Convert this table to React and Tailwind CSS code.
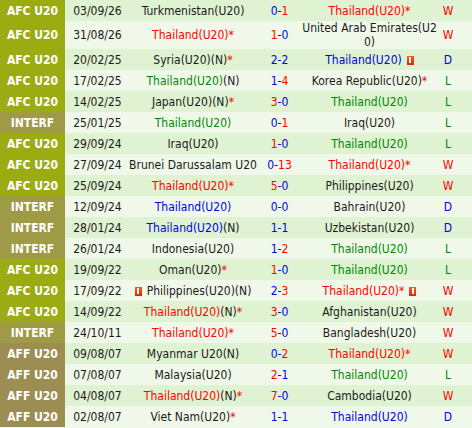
const R = "text-[#ff0000]";
const G = "text-[#008800]";
const B = "text-[#0000ee]";
const K = "text-[#1a1a1a]";

const rows = [
  ["AFC U20", "03/09/26", [["Turkmenistan(U20)", K]], [0, 1], [["Thailand(U20)", R], ["*", R]], "W"],
  ["AFC U20", "31/08/26", [["Thailand(U20)", R], ["*", R]], [1, 0], [["United Arab Emirates(U2", K], ["br"], ["0)", K]], "W"],
  ["AFC U20", "20/02/25", [["Syria(U20)(N)", K], ["*", R]], [2, 2], [["Thailand(U20)", B], ["card"]], "D"],
  ["AFC U20", "17/02/25", [["Thailand(U20)", G], ["(N)", K]], [1, 4], [["Korea Republic(U20)", K], ["*", R]], "L"],
  ["AFC U20", "14/02/25", [["Japan(U20)(N)", K], ["*", R]], [3, 0], [["Thailand(U20)", G]], "L"],
  ["INTERF", "25/01/25", [["Thailand(U20)", G]], [0, 1], [["Iraq(U20)", K]], "L"],
  ["AFC U20", "29/09/24", [["Iraq(U20)", K]], [1, 0], [["Thailand(U20)", G]], "L"],
  ["AFC U20", "27/09/24", [["Brunei Darussalam U20", K]], [0, 13], [["Thailand(U20)", R], ["*", R]], "W"],
  ["AFC U20", "25/09/24", [["Thailand(U20)", R], ["*", R]], [5, 0], [["Philippines(U20)", K]], "W"],
  ["INTERF", "12/09/24", [["Thailand(U20)", B]], [0, 0], [["Bahrain(U20)", K]], "D"],
  ["INTERF", "28/01/24", [["Thailand(U20)", B], ["(N)", K]], [1, 1], [["Uzbekistan(U20)", K]], "D"],
  ["INTERF", "26/01/24", [["Indonesia(U20)", K]], [1, 2], [["Thailand(U20)", G]], "L"],
  ["AFC U20", "19/09/22", [["Oman(U20)", K], ["*", R]], [1, 0], [["Thailand(U20)", G]], "L"],
  ["AFC U20", "17/09/22", [["card"], ["Philippines(U20)(N)", K]], [2, 3], [["Thailand(U20)", R], ["*", R], ["card"]], "W"],
  ["AFC U20", "14/09/22", [["Thailand(U20)", R], ["(N)", K], ["*", R]], [3, 0], [["Afghanistan(U20)", K]], "W"],
  ["INTERF", "24/10/11", [["Thailand(U20)", R], ["*", R]], [5, 0], [["Bangladesh(U20)", K]], "W"],
  ["AFF U20", "09/08/07", [["Myanmar U20(N)", K]], [0, 2], [["Thailand(U20)", R], ["*", R]], "W"],
  ["AFF U20", "07/08/07", [["Malaysia(U20)", K]], [2, 1], [["Thailand(U20)", G]], "L"],
  ["AFF U20", "04/08/07", [["Thailand(U20)", R], ["(N)", K], ["*", R]], [7, 0], [["Cambodia(U20)", K]], "W"],
  ["AFF U20", "02/08/07", [["Viet Nam(U20)", K], ["*", R]], [1, 1], [["Thailand(U20)", B]], "D"],
];

const leagueBg = {
  "AFC U20": "bg-[#9aac12]",
  "INTERF": "bg-[#9e9a46]",
  "AFF U20": "bg-[#9c8e52]",
};

const resultColor = { W: R, L: G, D: B };

function Card({ side }) {
  return (
    <span
      className={`inline-flex justify-center w-[7px] h-[9px] bg-gradient-to-b from-[#ff5a1a] to-[#e0200a] align-middle ${side === "left" ? "mr-[5px]" : "ml-[5px]"}`}
    >
      <span className="w-[2px] h-[6px] mt-[1.5px] bg-white" />
    </span>
  );
}

function Team({ parts }) {
  return (
    <span className="whitespace-nowrap">
      {parts.map((p, i) => {
        if (p[0] === "br") return <br key={i} />;
        if (p[0] === "card") return <Card key={i} side={i === 0 ? "left" : "right"} />;
        return (
          <span key={i} className={p[1]}>
            {p[0]}
          </span>
        );
      })}
    </span>
  );
}

function Score({ s }) {
  const [a, b] = s;
  const ca = a > b ? R : B;
  const cb = b > a ? R : B;
  return (
    <span className="whitespace-nowrap">
      <span className={ca}>{a}</span>
      <span className={B}>-</span>
      <span className={cb}>{b}</span>
    </span>
  );
}

export default function App() {
  return (
    <div
      className="w-[472px] h-[428px] overflow-hidden bg-[#f0f9e8] text-[12px] leading-[14px]"
      style={{ fontFamily: '"DejaVu Sans Condensed", "DejaVu Sans", sans-serif' }}
    >
      {rows.map((r, i) => (
        <div
          key={i}
          className={`flex items-stretch min-h-[21px] ${i % 2 === 0 ? "bg-[#dff2d1]" : "bg-[#f0f9e9]"}`}
        >
          <div
            className={`w-[65px] shrink-0 flex items-center justify-center text-white font-bold text-[12px] whitespace-nowrap ${leagueBg[r[0]]}`}
          >
            {r[0]}
          </div>
          <div className="w-[65px] shrink-0 flex items-center justify-center text-[#1a1a1a]">
            {r[1]}
          </div>
          <div className="w-[126px] shrink-0 flex items-center justify-center text-center">
            <Team parts={r[2]} />
          </div>
          <div className="w-[47px] shrink-0 flex items-center justify-center">
            <Score s={r[3]} />
          </div>
          <div className="w-[133px] shrink-0 flex items-center justify-center text-center">
            <Team parts={r[4]} />
          </div>
          <div className={`w-[24px] shrink-0 flex items-center justify-center ${resultColor[r[5]]}`}>
            {r[5]}
          </div>
          <div className="flex-1" />
        </div>
      ))}
    </div>
  );
}
